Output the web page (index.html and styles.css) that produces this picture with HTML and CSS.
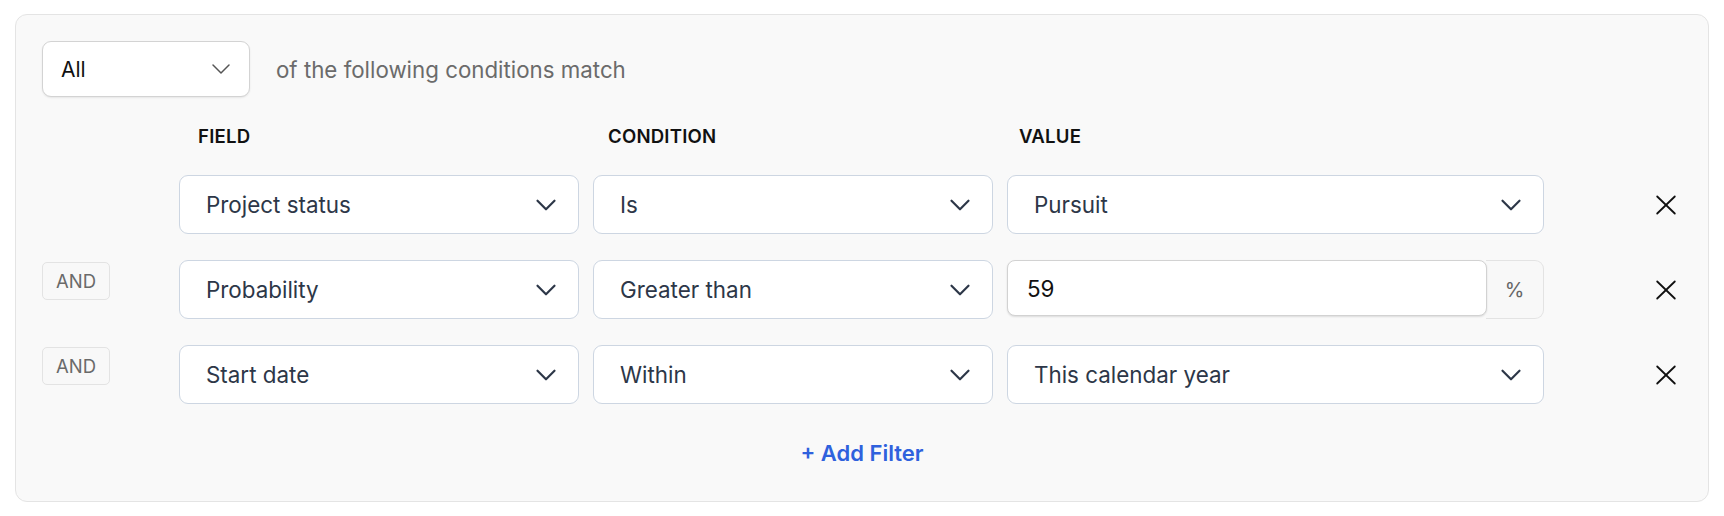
FILE: index.html
```html
<!DOCTYPE html>
<html lang="en">
<head>
<meta charset="utf-8">
<title>Filter conditions</title>
<link rel="stylesheet" href="styles.css">
</head>
<body>
<div class="card">
  <div class="match-bar">
    <div class="match-select">
      <span class="match-value">All</span>
      <svg class="chev chev-thin" viewBox="0 0 24 24"><path d="M4 8L12 16L20 8"/></svg>
    </div>
    <span class="match-text">of the following conditions match</span>
  </div>

  <div class="grid-row header-row">
    <span></span>
    <span class="col-head head-field">FIELD</span>
    <span class="col-head head-cond">CONDITION</span>
    <span class="col-head head-value">VALUE</span>
    <span></span>
  </div>

  <div class="rows">
    <div class="grid-row filter-row">
      <span></span>
      <div class="select"><span>Project status</span><svg class="chev" viewBox="0 0 24 24"><path d="M3.5 7.75L12 16.25L20.5 7.75"/></svg></div>
      <div class="select"><span>Is</span><svg class="chev" viewBox="0 0 24 24"><path d="M3.5 7.75L12 16.25L20.5 7.75"/></svg></div>
      <div class="select"><span>Pursuit</span><svg class="chev" viewBox="0 0 24 24"><path d="M3.5 7.75L12 16.25L20.5 7.75"/></svg></div>
      <button class="remove" aria-label="Remove"><svg viewBox="0 0 24 24"><path d="M3.2 3.5L20.8 20.5M20.8 3.5L3.2 20.5"/></svg></button>
    </div>

    <div class="grid-row filter-row">
      <span class="badge">AND</span>
      <div class="select"><span>Probability</span><svg class="chev" viewBox="0 0 24 24"><path d="M3.5 7.75L12 16.25L20.5 7.75"/></svg></div>
      <div class="select"><span>Greater than</span><svg class="chev" viewBox="0 0 24 24"><path d="M3.5 7.75L12 16.25L20.5 7.75"/></svg></div>
      <div class="input-group">
        <div class="num-input">59</div>
        <div class="addon">%</div>
      </div>
      <button class="remove" aria-label="Remove"><svg viewBox="0 0 24 24"><path d="M3.2 3.5L20.8 20.5M20.8 3.5L3.2 20.5"/></svg></button>
    </div>

    <div class="grid-row filter-row">
      <span class="badge">AND</span>
      <div class="select"><span>Start date</span><svg class="chev" viewBox="0 0 24 24"><path d="M3.5 7.75L12 16.25L20.5 7.75"/></svg></div>
      <div class="select"><span>Within</span><svg class="chev" viewBox="0 0 24 24"><path d="M3.5 7.75L12 16.25L20.5 7.75"/></svg></div>
      <div class="select"><span>This calendar year</span><svg class="chev" viewBox="0 0 24 24"><path d="M3.5 7.75L12 16.25L20.5 7.75"/></svg></div>
      <button class="remove" aria-label="Remove"><svg viewBox="0 0 24 24"><path d="M3.2 3.5L20.8 20.5M20.8 3.5L3.2 20.5"/></svg></button>
    </div>
  </div>

  <div class="add-wrap">
    <span class="add-filter">+ Add Filter</span>
  </div>
</div>
</body>
</html>
```

FILE: styles.css
```css
* { box-sizing: border-box; }

html, body {
  margin: 0;
  background: #ffffff;
}

body {
  padding: 14px 15px;
  font-family: Inter, "Noto Sans", "Liberation Sans", sans-serif;
  color: #111111;
}

.card {
  background: #f9f9f9;
  border: 1px solid #e4e4e4;
  border-radius: 12px;
  padding: 26px 26px 24px 26px;
  height: 488px;
}

.match-bar {
  display: flex;
  align-items: center;
  gap: 26px;
  height: 56px;
}

.match-select {
  width: 208px;
  height: 56px;
  background: #ffffff;
  border: 1px solid #d3d3d3;
  border-radius: 9px;
  box-shadow: 0 1px 2px rgba(0, 0, 0, 0.08);
  display: flex;
  align-items: center;
  justify-content: space-between;
  padding: 0 16px 0 18px;
}

.match-value {
  font-size: 21px;
  color: #111111;
}

.match-text {
  font-size: 22.3px;
  color: #6b6b6b;
}

.chev {
  width: 24px;
  height: 24px;
  flex: none;
  fill: none;
  stroke: #2d3748;
  stroke-width: 2.2;
  stroke-linecap: round;
  stroke-linejoin: round;
}

.chev-thin {
  stroke: #555555;
  stroke-width: 1.5;
}

.grid-row {
  display: grid;
  grid-template-columns: 123px 400px 400px 537px 1fr;
  column-gap: 14px;
}

.header-row {
  margin-top: 28px;
  height: 22px;
  align-items: center;
}

.col-head {
  font-size: 18.6px;
  line-height: 22px;
  font-weight: 600;
  letter-spacing: 0.2px;
  color: #111111;
}

.head-field { padding-left: 19px; }
.head-cond { padding-left: 15px; }
.head-value { padding-left: 12px; }

.rows {
  margin-top: 28px;
  display: flex;
  flex-direction: column;
  gap: 26px;
}

.filter-row {
  height: 59px;
  align-items: center;
}

.badge {
  align-self: start;
  margin-top: 2px;
  width: 68px;
  height: 38px;
  border: 1px solid #e3e3e3;
  border-radius: 5px;
  background: #f8f8f8;
  color: #6a6a6a;
  font-size: 18.5px;
  display: flex;
  align-items: center;
  justify-content: center;
}

.select {
  height: 59px;
  background: #ffffff;
  border: 1px solid #cdd6e2;
  border-radius: 9px;
  display: flex;
  align-items: center;
  justify-content: space-between;
  padding: 0 20px 0 26px;
  font-size: 22.4px;
  color: #2d3748;
}

.input-group {
  display: flex;
  height: 59px;
}

.num-input {
  flex: 1;
  height: 56px;
  background: #ffffff;
  border: 1px solid #d2d2d2;
  border-radius: 8px;
  box-shadow: 0 1px 2px rgba(0, 0, 0, 0.12);
  display: flex;
  align-items: center;
  padding-left: 19px;
  font-size: 22.4px;
  color: #111111;
  position: relative;
  z-index: 1;
}

.addon {
  width: 58px;
  height: 59px;
  margin-left: -1px;
  background: #f8f8f8;
  border: 1px solid #e3e3e3;
  border-left: none;
  border-radius: 0 9px 9px 0;
  display: flex;
  align-items: center;
  justify-content: center;
  font-size: 20px;
  color: #666666;
}

.remove {
  justify-self: end;
  margin-right: 4px;
  width: 24px;
  height: 24px;
  padding: 0;
  border: none;
  background: transparent;
  cursor: pointer;
}

.remove svg {
  width: 24px;
  height: 24px;
  display: block;
  fill: none;
  stroke: #111111;
  stroke-width: 1.8;
  stroke-linecap: round;
}

.add-wrap {
  margin-top: 25px;
  height: 48px;
  display: flex;
  align-items: center;
  justify-content: center;
}

.add-filter {
  font-size: 22px;
  font-weight: 600;
  color: #2f61dd;
  cursor: pointer;
}
```
